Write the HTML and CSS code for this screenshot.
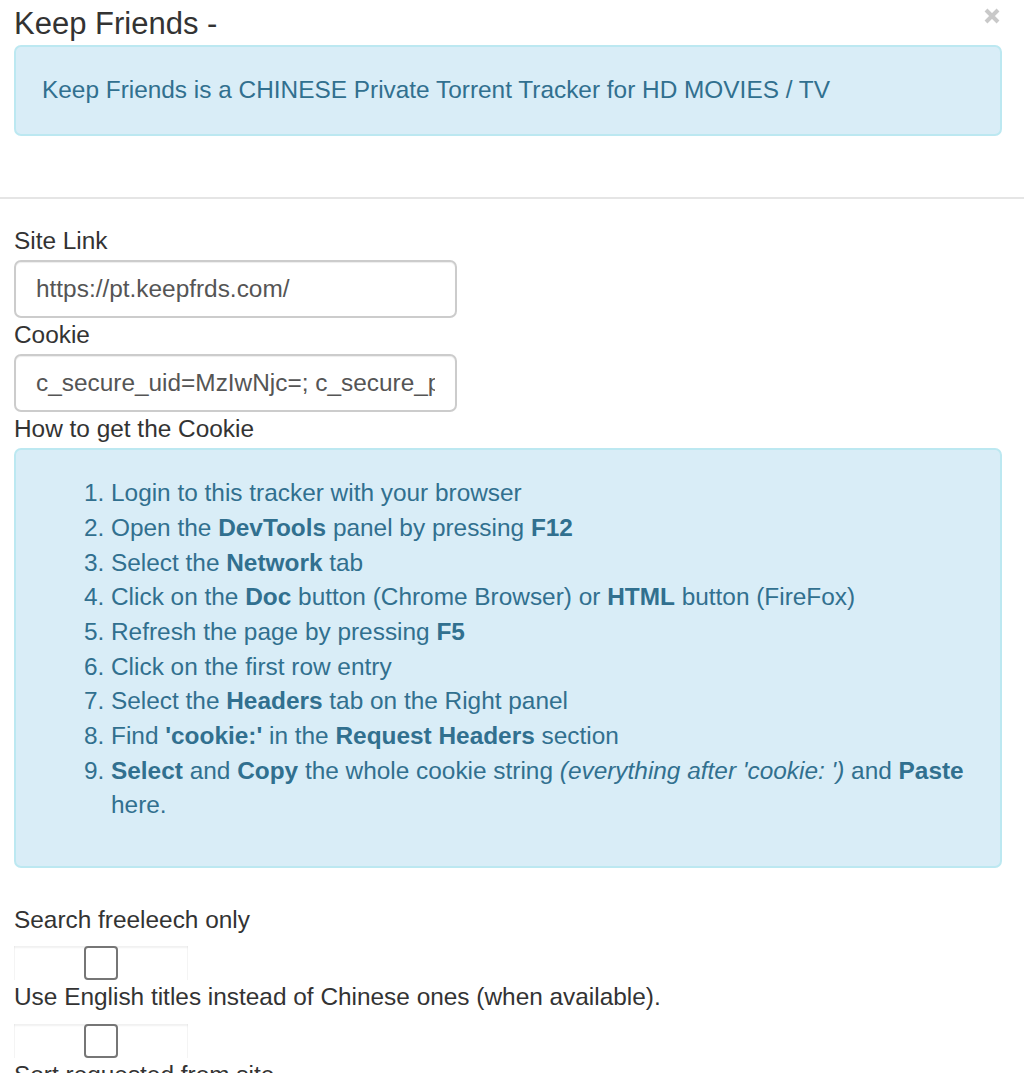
FILE: index.html
```html
<!DOCTYPE html>
<html lang="en">
<head>
<meta charset="utf-8">
<title>Keep Friends</title>
<link rel="stylesheet" href="styles.css">
</head>
<body>
<div class="modal">
  <div class="modal-header">
    <button class="close" type="button" aria-label="Close">
      <svg width="16" height="16" viewBox="0 0 16 16"><path d="M2 2 L14 14 M14 2 L2 14" stroke="#c9c9c9" stroke-width="4" fill="none"/></svg>
    </button>
    <h4 class="modal-title">Keep Friends -</h4>
    <div class="alert alert-header">Keep Friends is a CHINESE Private Torrent Tracker for HD MOVIES / TV</div>
  </div>
  <div class="modal-body">
    <label class="field-label">Site Link</label>
    <input class="form-control" type="text" value="https://pt.keepfrds.com/">
    <label class="field-label">Cookie</label>
    <input class="form-control" type="text" value="c_secure_uid=MzIwNjc=; c_secure_pass=0a1b2c3d4e5f; c_secure_ssl=eWVhaA==">
    <label class="field-label">How to get the Cookie</label>
    <div class="alert alert-info">
      <ol class="steps">
        <li>Login to this tracker with your browser</li>
        <li>Open the <b>DevTools</b> panel by pressing <b>F12</b></li>
        <li>Select the <b>Network</b> tab</li>
        <li>Click on the <b>Doc</b> button (Chrome Browser) or <b>HTML</b> button (FireFox)</li>
        <li>Refresh the page by pressing <b>F5</b></li>
        <li>Click on the first row entry</li>
        <li>Select the <b>Headers</b> tab on the Right panel</li>
        <li>Find <b>'cookie:'</b> in the <b>Request Headers</b> section</li>
        <li><b>Select</b> and <b>Copy</b> the whole cookie string <i>(everything after 'cookie: ')</i> and <b>Paste</b> here.</li>
      </ol>
    </div>
    <label class="field-label check-label">Search freeleech only</label>
    <div class="check-wrap"><input class="check" type="checkbox"></div>
    <label class="field-label check-label">Use English titles instead of Chinese ones (when available).</label>
    <div class="check-wrap"><input class="check" type="checkbox"></div>
    <label class="field-label check-label">Sort requested from site</label>
    <div class="check-wrap"><input class="check" type="checkbox"></div>
  </div>
</div>
</body>
</html>
```
FILE: styles.css
```css
html, body {
  margin: 0;
  padding: 0;
  background: #ffffff;
}

body {
  font-family: "Liberation Sans", Arial, Helvetica, sans-serif;
  font-size: 24.4px;
  line-height: 34.65px;
  color: #333333;
}

.modal-header {
  padding: 1.5px 22px 27px 14px;
  border-bottom: 2px solid #e5e5e5;
}

.modal-title {
  margin: 0;
  font-size: 31px;
  font-weight: normal;
  line-height: 43.5px;
  color: #333333;
}

.close {
  float: right;
  margin: 6px 2px 0 0;
  padding: 0;
  width: 16px;
  height: 16px;
  border: 0;
  background: transparent;
  display: flex;
  cursor: pointer;
}

.alert {
  border: 2px solid #bce8f1;
  border-radius: 7px;
  background: #d9edf7;
  color: #31708f;
  padding: 26px;
  margin-bottom: 34.6px;
}

.modal-body {
  padding: 24.7px 22px 26px 14px;
}

.field-label {
  display: block;
  margin: 0 0 1.5px;
  font-weight: normal;
}

.form-control {
  display: block;
  box-sizing: border-box;
  width: 443px;
  height: 58px;
  margin: 0;
  padding: 0 20px;
  border: 2px solid #cccccc;
  border-radius: 7px;
  font-family: "Liberation Sans", Arial, Helvetica, sans-serif;
  font-size: 24.4px;
  color: #555555;
  background: #ffffff;
  box-shadow: inset 0 1px 1px rgba(0, 0, 0, 0.075);
  outline: none;
}

.steps {
  margin: 0 0 17px;
  padding-left: 69px;
}

.steps b {
  font-weight: bold;
}

.check-label {
  margin-bottom: 8.6px;
}

.check-wrap {
  width: 174px;
  height: 34.5px;
  display: flex;
  justify-content: center;
  box-shadow: inset 0 2px 2px rgba(0, 0, 0, 0.06), inset 1px 0 0 rgba(0, 0, 0, 0.03), inset -1px 0 0 rgba(0, 0, 0, 0.03);
}

.check {
  -webkit-appearance: none;
  appearance: none;
  box-sizing: border-box;
  width: 34px;
  height: 34.5px;
  margin: 0;
  border: 2px solid #767676;
  border-radius: 4px;
  background: #ffffff;
}
```
